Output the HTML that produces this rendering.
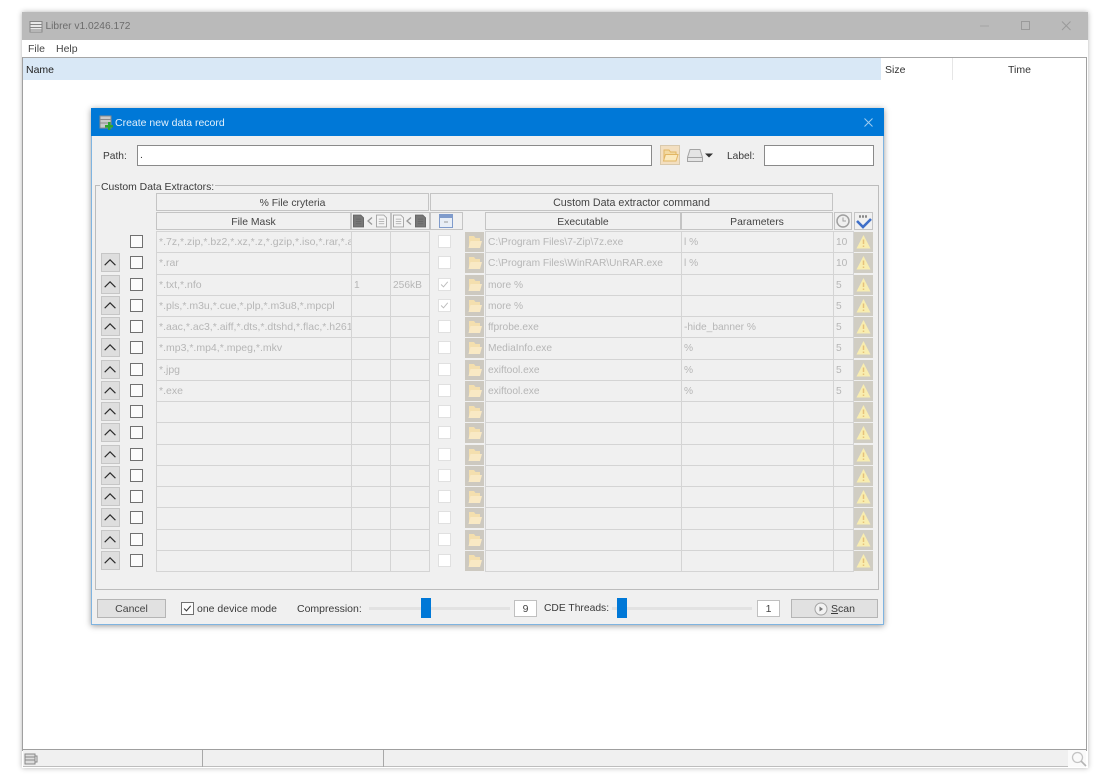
<!DOCTYPE html>
<html lang="en"><head><meta charset="utf-8"><title>Librer</title>
<style>
html,body{margin:0;padding:0;background:#fff}
body{width:1100px;height:779px;position:relative;overflow:hidden;font:10.400px "Liberation Sans",sans-serif;color:#333;filter:blur(.35px)}
div,span{position:absolute;box-sizing:border-box;white-space:nowrap}
svg{position:absolute;display:block;overflow:visible}
.h{background:#f0f0f0;border:1px solid #c4c4c4;text-align:center;line-height:19px;color:#444;height:18px;top:0}
.c{height:22.270px;top:0;border:1px solid #d4d4d4;line-height:21px;color:#b6b6b6;padding-left:2px;overflow:hidden;background:#f0f0f0;font-size:10.200px}
.m{left:156px;width:196px;font-size:10.500px}.a{left:351px;width:40px}.b{left:390px;width:40px}.e{left:485px;width:197px}.p{left:681px;width:153px}.t{left:833px;width:21px}
.r{left:0;top:0;width:1100px;height:22px}
.u{left:101px;top:1px;width:19px;height:19px;background:#dedede;border:1px solid #c6c6c6}
.x{left:130px;top:4px;width:13px;height:13px;background:#fbfbfb;border:1px solid #707070}
.y{left:438px;top:4px;width:13px;height:13px;background:#fff;border:1px solid #e0e0e0}
.f{left:465px;top:1px;width:19px;height:20px;background:#cdc9c0}
.w{left:854px;top:1px;width:19px;height:20px;background:#d0cdc3}
.tx{color:#3a3a3a}
.in{background:#fff;border:1px solid #8a8a8a}
.num{background:#fff;border:1px solid #c0c0c0;text-align:center;line-height:16px;color:#444;font-size:10.500px}
.track{height:3px;background:#e2e2e2;top:607px}
.hd{background:#0078d7;top:598px;width:10px;height:20px}
.btn{background:#e1e1e1;border:1px solid #b5b5b5;text-align:center;color:#444;font-size:10.500px}
</style></head><body>
<svg width="0" height="0" style="position:absolute"><defs>
<symbol id="fo" viewBox="0 0 19 20"><path d="M4 4h5l1.500 2H15v8H4z" fill="#f4dfae"/><path d="M3.500 16l2-7H17l-2 7z" fill="#f9e9c4"/></symbol>
<symbol id="wa" viewBox="0 0 19 20"><path d="M9.500 3L16.500 16.500H2.500z" fill="#f8edb0"/><path d="M9.500 7.500v4.500M9.500 13.500v1.500" stroke="#e6c27a" stroke-width="1.500"/></symbol>
<symbol id="up" viewBox="0 0 19 19"><path d="M3 12.500L9 6.500l6 6" fill="none" stroke="#2a2a2a" stroke-width="1.300"/></symbol>
<symbol id="ck" viewBox="0 0 13 13"><path d="M2.500 6.500l2.800 2.800 5-6" fill="none" stroke="#bbb" stroke-width="1.100"/></symbol>
<symbol id="doc" viewBox="0 0 12 14"><path d="M.5.500h8l3 3v10H.5z"/><path d="M3 5h6M3 7.500h6M3 10h6" stroke-width=".8"/></symbol>
</defs></svg>

<!-- main window -->
<div style="left:22px;top:12px;width:1066px;height:756px;background:#fff;box-shadow:0 0 5px rgba(0,0,0,.3)"></div>
<div style="left:22px;top:12px;width:1066px;height:28px;background:#bababa"></div>
<svg style="left:29px;top:19px" width="14" height="15" viewBox="0 0 14 15"><path d="M1 2.500h12v10.500H1z" fill="#e8e8e8" stroke="#858585"/><path d="M1 5.500h12M1 8.500h12M1 11h12" stroke="#858585"/></svg>
<span style="left:45.500px;top:21px;font-size:10.200px;color:#6c6c6c">Librer v1.0246.172</span>
<svg style="left:980px;top:20px" width="100" height="12" viewBox="0 0 100 12"><path d="M0 6h9" stroke="#a4a4a4"/><path d="M41.500 1.500h8v8h-8z" fill="none" stroke="#9a9a9a"/><path d="M82 1.500l8.500 8.500M90.500 1.500L82 10" stroke="#9a9a9a"/></svg>
<span style="left:28px;top:43px;font-size:10.500px;color:#444">File</span>
<span style="left:56px;top:43px;font-size:10.500px;color:#444">Help</span>
<div style="left:22px;top:57px;width:1065px;height:1px;background:#a6a6a6"></div>
<div style="left:22px;top:57px;width:1px;height:694px;background:#a0a0a0"></div>
<div style="left:1086px;top:57px;width:1px;height:694px;background:#a0a0a0"></div>
<div style="left:23px;top:58px;width:858px;height:22px;background:#d9e8f6"></div>
<span style="left:26px;top:64px;font-size:10.500px;color:#222">Name</span>
<span style="left:885px;top:64px;font-size:10.500px;color:#333">Size</span>
<div style="left:952px;top:58px;width:1px;height:22px;background:#e6e6e6"></div>
<span style="left:1008px;top:64px;font-size:10.500px;color:#333">Time</span>
<!-- status bar -->
<div style="left:22px;top:749px;width:1065px;height:1px;background:#9f9f9f"></div>
<div style="left:23px;top:750px;width:1063px;height:17px;background:#f0f0f0;border-bottom:1px solid #bdbdbd"></div>
<div style="left:202px;top:750px;width:1px;height:17px;background:#a8a8a8"></div>
<div style="left:383px;top:750px;width:1px;height:17px;background:#a8a8a8"></div>
<div style="left:1068px;top:750px;width:18px;height:17px;background:#fafafa"></div>
<svg style="left:24px;top:752px" width="14" height="14" viewBox="0 0 14 14"><path d="M1 2h10v10H1z" fill="#ddd" stroke="#888"/><path d="M1 5h10M1 8h10M11 4h2v6h-2" stroke="#888" fill="none"/></svg>
<svg style="left:1071px;top:751px" width="16" height="16" viewBox="0 0 16 16"><circle cx="6.500" cy="6.500" r="5" fill="none" stroke="#c4c4c4" stroke-width="1.300"/><path d="M10 10l5 5" stroke="#b4b4b4" stroke-width="1.600"/></svg>

<!-- dialog -->
<div style="left:91px;top:108px;width:793px;height:517px;background:#f0f0f0;box-shadow:0 1px 6px rgba(0,0,0,.4);border:1px solid #7fb4e0;border-top:0"></div>
<div style="left:91px;top:108px;width:793px;height:28px;background:#0078d7"></div>
<svg style="left:99px;top:114px" width="14" height="16" viewBox="0 0 14 16"><path d="M1 2h11v12H1z" fill="#c9c9c9" stroke="#8a8a8a"/><path d="M1 5.500h11M1 9h11" stroke="#8a8a8a"/><path d="M6 11h3V8h2.500v3H14v2.500h-2.500V16H9v-2.500H6z" fill="#2fa52f"/></svg>
<span style="left:115px;top:117px;font-size:10.500px;color:#e2f0fb">Create new data record</span>
<svg style="left:864px;top:118px" width="9" height="9" viewBox="0 0 9 9"><path d="M.5.500l8 8M8.500.500l-8 8" stroke="#9fcdf0"/></svg>

<span class="tx" style="left:103px;top:151px;font-size:10.200px">Path:</span>
<div class="in" style="left:137px;top:145px;width:515px;height:21px;line-height:19px;padding-left:2px;color:#333">.</div>
<div style="left:660px;top:145px;width:20px;height:20px;background:#f3dfc0;border:1px solid #d9c9ad"></div>
<svg style="left:661px;top:145px" width="19" height="20"><path d="M3 5h5l1.500 2H15v8H3z" fill="#f3d9a0" stroke="#e2b664"/><path d="M2.500 16l2-6.500H17l-2 6.500z" fill="#fbe9bd" stroke="#e2b664"/></svg>
<svg style="left:687px;top:148px" width="28" height="15" viewBox="0 0 28 15"><path d="M3 1.500h10l2.500 8v4H.5v-4z" fill="#e4e4e4" stroke="#a4a4a4"/><path d="M.5 9.500h15" stroke="#a4a4a4"/><path d="M18 5.500h8l-4 4z" fill="#333"/></svg>
<span class="tx" style="left:727px;top:151px;font-size:10.200px">Label:</span>
<div class="in" style="left:764px;top:145px;width:110px;height:21px"></div>

<!-- frame -->
<div style="left:95px;top:185px;width:784px;height:405px;border:1px solid #bcbcbc"></div>
<span class="tx" style="left:100px;top:182px;background:#f0f0f0;padding:0 1px;font-size:10.400px">Custom Data Extractors:</span>

<div class="h" style="left:156px;top:193px;width:273px">% File cryteria</div>
<div class="h" style="left:430px;top:193px;width:403px;font-size:10.700px">Custom Data extractor command</div>
<div class="h" style="left:156px;top:212px;width:195px">File Mask</div>
<div class="h" style="left:351px;top:212px;width:40px"></div>
<div class="h" style="left:391px;top:212px;width:39px"></div>
<svg style="left:353px;top:214px;fill:#777;stroke:#666" width="11" height="14"><use href="#doc" width="11" height="14"/></svg>
<svg style="left:367px;top:217px" width="7" height="8"><path d="M5 .5L1 4l4 3.500" fill="none" stroke="#999" stroke-width="1.300"/></svg>
<svg style="left:376px;top:214px;fill:#f4f4f4;stroke:#a4a4a4" width="11" height="14"><use href="#doc" width="11" height="14"/></svg>
<svg style="left:393px;top:214px;fill:#f4f4f4;stroke:#a4a4a4" width="11" height="14"><use href="#doc" width="11" height="14"/></svg>
<svg style="left:406px;top:217px" width="7" height="8"><path d="M5 .5L1 4l4 3.500" fill="none" stroke="#999" stroke-width="1.300"/></svg>
<svg style="left:415px;top:214px;fill:#777;stroke:#666" width="11" height="14"><use href="#doc" width="11" height="14"/></svg>
<div class="h" style="left:430px;top:212px;width:33px"></div>
<svg style="left:439px;top:214px" width="14" height="14" viewBox="0 0 14 14"><path d="M.5.500h13v13H.5z" fill="#e8eef6" stroke="#7f9bcb"/><path d="M1 1h12v3H1z" fill="#7f9bcb"/><path d="M5 8h4" stroke="#999"/></svg>
<div class="h" style="left:485px;top:212px;width:196px">Executable</div>
<div class="h" style="left:681px;top:212px;width:152px">Parameters</div>
<div class="h" style="left:834px;top:212px;width:18px"></div>
<svg style="left:836px;top:214px" width="14" height="14" viewBox="0 0 14 14"><circle cx="7" cy="7" r="6" fill="#efefef" stroke="#a0a0a0" stroke-width="1.500"/><path d="M7 3.500V7h3" fill="none" stroke="#a0a0a0"/></svg>
<div class="h" style="left:854px;top:212px;width:19px"></div>
<svg style="left:856px;top:214px" width="16" height="15" viewBox="0 0 16 15"><path d="M3 2.500h8" stroke="#888" stroke-width="2.500" stroke-dasharray="2 1"/><path d="M1 7l6 6 8-8" fill="none" stroke="#3f6fc8" stroke-width="2.600"/></svg>

<!-- rows -->
<div class="r" style="top:231px"><div class="x"></div><div class="c m">*.7z,*.zip,*.bz2,*.xz,*.z,*.gzip,*.iso,*.rar,*.arj,*.cab</div><div class="c a"></div><div class="c b"></div><div class="y"></div><div class="f"><svg width="19" height="20"><use href="#fo" width="19" height="20"/></svg></div><div class="c e">C:\Program Files\7-Zip\7z.exe</div><div class="c p">l %</div><div class="c t">10</div><div class="w"><svg width="19" height="20"><use href="#wa" width="19" height="20"/></svg></div></div>
<div class="r" style="top:252.270px"><div class="u"><svg width="17" height="17"><use href="#up" width="17" height="17"/></svg></div><div class="x"></div><div class="c m">*.rar</div><div class="c a"></div><div class="c b"></div><div class="y"></div><div class="f"><svg width="19" height="20"><use href="#fo" width="19" height="20"/></svg></div><div class="c e">C:\Program Files\WinRAR\UnRAR.exe</div><div class="c p">l %</div><div class="c t">10</div><div class="w"><svg width="19" height="20"><use href="#wa" width="19" height="20"/></svg></div></div>
<div class="r" style="top:273.530px"><div class="u"><svg width="17" height="17"><use href="#up" width="17" height="17"/></svg></div><div class="x"></div><div class="c m">*.txt,*.nfo</div><div class="c a">1</div><div class="c b">256kB</div><div class="y"><svg width="11" height="11"><use href="#ck" width="11" height="11"/></svg></div><div class="f"><svg width="19" height="20"><use href="#fo" width="19" height="20"/></svg></div><div class="c e">more %</div><div class="c p"></div><div class="c t">5</div><div class="w"><svg width="19" height="20"><use href="#wa" width="19" height="20"/></svg></div></div>
<div class="r" style="top:294.800px"><div class="u"><svg width="17" height="17"><use href="#up" width="17" height="17"/></svg></div><div class="x"></div><div class="c m">*.pls,*.m3u,*.cue,*.plp,*.m3u8,*.mpcpl</div><div class="c a"></div><div class="c b"></div><div class="y"><svg width="11" height="11"><use href="#ck" width="11" height="11"/></svg></div><div class="f"><svg width="19" height="20"><use href="#fo" width="19" height="20"/></svg></div><div class="c e">more %</div><div class="c p"></div><div class="c t">5</div><div class="w"><svg width="19" height="20"><use href="#wa" width="19" height="20"/></svg></div></div>
<div class="r" style="top:316.070px"><div class="u"><svg width="17" height="17"><use href="#up" width="17" height="17"/></svg></div><div class="x"></div><div class="c m">*.aac,*.ac3,*.aiff,*.dts,*.dtshd,*.flac,*.h261,*.h263</div><div class="c a"></div><div class="c b"></div><div class="y"></div><div class="f"><svg width="19" height="20"><use href="#fo" width="19" height="20"/></svg></div><div class="c e">ffprobe.exe</div><div class="c p">-hide_banner %</div><div class="c t">5</div><div class="w"><svg width="19" height="20"><use href="#wa" width="19" height="20"/></svg></div></div>
<div class="r" style="top:337.330px"><div class="u"><svg width="17" height="17"><use href="#up" width="17" height="17"/></svg></div><div class="x"></div><div class="c m">*.mp3,*.mp4,*.mpeg,*.mkv</div><div class="c a"></div><div class="c b"></div><div class="y"></div><div class="f"><svg width="19" height="20"><use href="#fo" width="19" height="20"/></svg></div><div class="c e">MediaInfo.exe</div><div class="c p">%</div><div class="c t">5</div><div class="w"><svg width="19" height="20"><use href="#wa" width="19" height="20"/></svg></div></div>
<div class="r" style="top:358.600px"><div class="u"><svg width="17" height="17"><use href="#up" width="17" height="17"/></svg></div><div class="x"></div><div class="c m">*.jpg</div><div class="c a"></div><div class="c b"></div><div class="y"></div><div class="f"><svg width="19" height="20"><use href="#fo" width="19" height="20"/></svg></div><div class="c e">exiftool.exe</div><div class="c p">%</div><div class="c t">5</div><div class="w"><svg width="19" height="20"><use href="#wa" width="19" height="20"/></svg></div></div>
<div class="r" style="top:379.870px"><div class="u"><svg width="17" height="17"><use href="#up" width="17" height="17"/></svg></div><div class="x"></div><div class="c m">*.exe</div><div class="c a"></div><div class="c b"></div><div class="y"></div><div class="f"><svg width="19" height="20"><use href="#fo" width="19" height="20"/></svg></div><div class="c e">exiftool.exe</div><div class="c p">%</div><div class="c t">5</div><div class="w"><svg width="19" height="20"><use href="#wa" width="19" height="20"/></svg></div></div>
<div class="r" style="top:401.130px"><div class="u"><svg width="17" height="17"><use href="#up" width="17" height="17"/></svg></div><div class="x"></div><div class="c m"></div><div class="c a"></div><div class="c b"></div><div class="y"></div><div class="f"><svg width="19" height="20"><use href="#fo" width="19" height="20"/></svg></div><div class="c e"></div><div class="c p"></div><div class="c t"></div><div class="w"><svg width="19" height="20"><use href="#wa" width="19" height="20"/></svg></div></div>
<div class="r" style="top:422.400px"><div class="u"><svg width="17" height="17"><use href="#up" width="17" height="17"/></svg></div><div class="x"></div><div class="c m"></div><div class="c a"></div><div class="c b"></div><div class="y"></div><div class="f"><svg width="19" height="20"><use href="#fo" width="19" height="20"/></svg></div><div class="c e"></div><div class="c p"></div><div class="c t"></div><div class="w"><svg width="19" height="20"><use href="#wa" width="19" height="20"/></svg></div></div>
<div class="r" style="top:443.670px"><div class="u"><svg width="17" height="17"><use href="#up" width="17" height="17"/></svg></div><div class="x"></div><div class="c m"></div><div class="c a"></div><div class="c b"></div><div class="y"></div><div class="f"><svg width="19" height="20"><use href="#fo" width="19" height="20"/></svg></div><div class="c e"></div><div class="c p"></div><div class="c t"></div><div class="w"><svg width="19" height="20"><use href="#wa" width="19" height="20"/></svg></div></div>
<div class="r" style="top:464.930px"><div class="u"><svg width="17" height="17"><use href="#up" width="17" height="17"/></svg></div><div class="x"></div><div class="c m"></div><div class="c a"></div><div class="c b"></div><div class="y"></div><div class="f"><svg width="19" height="20"><use href="#fo" width="19" height="20"/></svg></div><div class="c e"></div><div class="c p"></div><div class="c t"></div><div class="w"><svg width="19" height="20"><use href="#wa" width="19" height="20"/></svg></div></div>
<div class="r" style="top:486.200px"><div class="u"><svg width="17" height="17"><use href="#up" width="17" height="17"/></svg></div><div class="x"></div><div class="c m"></div><div class="c a"></div><div class="c b"></div><div class="y"></div><div class="f"><svg width="19" height="20"><use href="#fo" width="19" height="20"/></svg></div><div class="c e"></div><div class="c p"></div><div class="c t"></div><div class="w"><svg width="19" height="20"><use href="#wa" width="19" height="20"/></svg></div></div>
<div class="r" style="top:507.470px"><div class="u"><svg width="17" height="17"><use href="#up" width="17" height="17"/></svg></div><div class="x"></div><div class="c m"></div><div class="c a"></div><div class="c b"></div><div class="y"></div><div class="f"><svg width="19" height="20"><use href="#fo" width="19" height="20"/></svg></div><div class="c e"></div><div class="c p"></div><div class="c t"></div><div class="w"><svg width="19" height="20"><use href="#wa" width="19" height="20"/></svg></div></div>
<div class="r" style="top:528.730px"><div class="u"><svg width="17" height="17"><use href="#up" width="17" height="17"/></svg></div><div class="x"></div><div class="c m"></div><div class="c a"></div><div class="c b"></div><div class="y"></div><div class="f"><svg width="19" height="20"><use href="#fo" width="19" height="20"/></svg></div><div class="c e"></div><div class="c p"></div><div class="c t"></div><div class="w"><svg width="19" height="20"><use href="#wa" width="19" height="20"/></svg></div></div>
<div class="r" style="top:550px"><div class="u"><svg width="17" height="17"><use href="#up" width="17" height="17"/></svg></div><div class="x"></div><div class="c m"></div><div class="c a"></div><div class="c b"></div><div class="y"></div><div class="f"><svg width="19" height="20"><use href="#fo" width="19" height="20"/></svg></div><div class="c e"></div><div class="c p"></div><div class="c t"></div><div class="w"><svg width="19" height="20"><use href="#wa" width="19" height="20"/></svg></div></div>

<!-- bottom -->
<div class="btn" style="left:97px;top:599px;width:69px;height:19px;line-height:18px">Cancel</div>
<div class="x" style="left:181px;top:602px"></div>
<svg style="left:182px;top:603px" width="11" height="11" viewBox="0 0 13 13"><path d="M2.500 6.500l2.800 2.800 5-6" fill="none" stroke="#333" stroke-width="1.200"/></svg>
<span class="tx" style="left:197px;top:603px;font-size:10.500px">one device mode</span>
<span class="tx" style="left:297px;top:603px;font-size:10.500px">Compression:</span>
<div class="track" style="left:369px;width:141px"></div>
<div class="hd" style="left:421px"></div>
<div class="num" style="left:514px;top:600px;width:23px;height:17px">9</div>
<span class="tx" style="left:544px;top:603px;font-size:10.300px">CDE Threads:</span>
<div class="track" style="left:612px;width:140px"></div>
<div class="hd" style="left:617px"></div>
<div class="num" style="left:757px;top:600px;width:23px;height:17px">1</div>
<div class="btn" style="left:791px;top:599px;width:87px;height:19px"></div>
<svg style="left:814px;top:602px" width="14" height="14" viewBox="0 0 14 14"><circle cx="7" cy="7" r="6" fill="#f2f2f2" stroke="#a4a4a4"/><path d="M5.500 4.500L9 7l-3.500 2.500z" fill="#777"/></svg>
<span class="tx" style="left:831px;top:603px;font-size:10.500px"><u>S</u>can</span>
</body></html>
